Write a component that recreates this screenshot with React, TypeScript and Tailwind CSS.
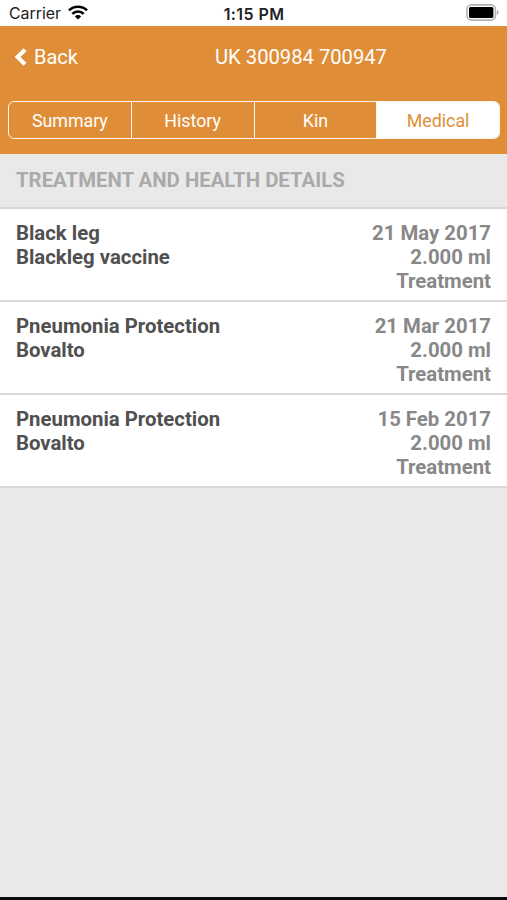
import React, { useState } from 'react';

interface TreatmentRecord {
  condition: string;
  product: string;
  date: string;
  dose: string;
  type: string;
}

const tabs = ['Summary', 'History', 'Kin', 'Medical'];

const records: TreatmentRecord[] = [
  { condition: 'Black leg', product: 'Blackleg vaccine', date: '21 May 2017', dose: '2.000 ml', type: 'Treatment' },
  { condition: 'Pneumonia Protection', product: 'Bovalto', date: '21 Mar 2017', dose: '2.000 ml', type: 'Treatment' },
  { condition: 'Pneumonia Protection', product: 'Bovalto', date: '15 Feb 2017', dose: '2.000 ml', type: 'Treatment' },
];

const StatusBar: React.FC = () => (
  <div className="grid h-[26px] shrink-0 grid-cols-3 items-center bg-white pl-[9px] pr-[8px] font-['Inter',sans-serif] text-[#222]">
    <div className="flex items-center gap-[7px]">
      <span className="pt-[2px] text-[15.9px]">Carrier</span>
      <svg width="20" height="15" viewBox="0 0 20 15" fill="none" stroke="#000" strokeWidth="2.6">
        <path d="M1 5.4a12.8 12.8 0 0 1 18 0" />
        <path d="M4.3 8.8a8.1 8.1 0 0 1 11.4 0" />
        <path d="M10 14.5 6.9 11.4a4.4 4.4 0 0 1 6.2 0z" fill="#000" stroke="none" />
      </svg>
    </div>
    <span className="pt-px text-center text-[16px] font-semibold tracking-[0.4px]">1:15 PM</span>
    <svg className="-mt-px justify-self-end" width="33" height="17" viewBox="0 0 33 17">
      <rect x="0.9" y="0.9" width="28.6" height="15.2" rx="4.5" fill="#fff" stroke="#b3b3b3" strokeWidth="1.6" />
      <rect x="3" y="3" width="24.4" height="11" rx="1.5" fill="#000" />
      <path d="M31 6v5c2-.8 2-4.200 0-5z" fill="#aaa" />
    </svg>
  </div>
);

const App: React.FC = () => {
  const [activeTab, setActiveTab] = useState('Medical');

  return (
    <div className="flex h-[900px] w-[507px] flex-col overflow-hidden border-b-[3px] border-[#0c0c0e] bg-[#e9e9e9] font-['Roboto',sans-serif]">
      <StatusBar />

      <header className="h-[128px] shrink-0 bg-[#df8e37] pr-[7px] pl-2 text-white">
        <div className="grid h-[62px] grid-cols-[94px_1fr] items-center text-xl">
          <button className="flex items-center gap-[7px] pl-[6px]">
            <svg width="13" height="18" viewBox="0 0 13 18" fill="none" stroke="#fff" strokeWidth="4">
              <path d="M11 1.800 3.500 9 11 16.200" />
            </svg>
            Back
          </button>
          <h1 className="text-center text-[20.2px]">UK 300984 700947</h1>
        </div>
        <nav className="mt-[13px] flex h-[38px] overflow-hidden rounded-md border-[1.5px] border-white/90">
          {tabs.map((tab) => (
            <button
              key={tab}
              onClick={() => setActiveTab(tab)}
              className={`flex-1 border-r border-white/90 pt-[2px] text-[17.8px] last:border-r-0 ${
                activeTab === tab ? 'bg-white text-[#df8e37]' : ''
              }`}
            >
              {tab}
            </button>
          ))}
        </nav>
      </header>

      <h2 className="flex h-[55px] shrink-0 items-center border-b-2 border-[#d8d8d8] px-4 text-[20.35px] font-bold text-[#aaa]">
        TREATMENT AND HEALTH DETAILS
      </h2>

      <ul>
        {records.map((record) => (
          <li
            key={record.date}
            className="flex h-[93px] justify-between border-b-2 border-[#d8d8d8] bg-white px-4 pt-3 text-[20.35px] leading-6 font-bold"
          >
            <div className="text-[#505050]">
              <p>{record.condition}</p>
              <p>{record.product}</p>
            </div>
            <div className="text-right text-[#888]">
              <p>{record.date}</p>
              <p>{record.dose}</p>
              <p>{record.type}</p>
            </div>
          </li>
        ))}
      </ul>
    </div>
  );
};

export default App;
